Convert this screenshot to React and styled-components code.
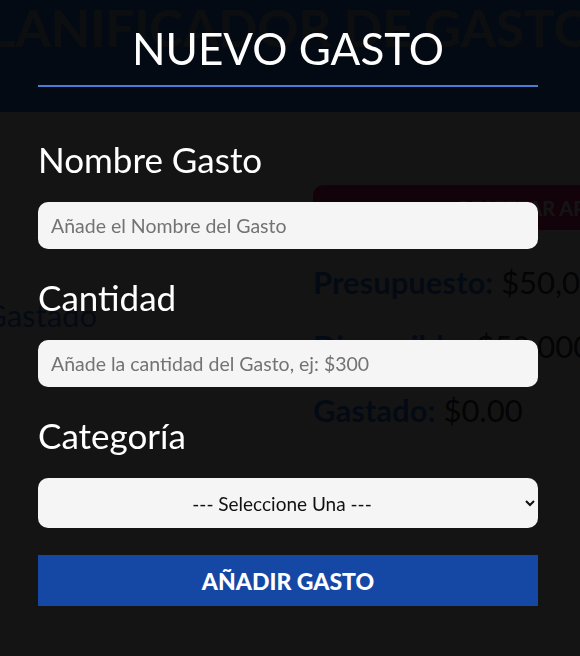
import React from "react";
import styled, { createGlobalStyle } from "styled-components";

const GlobalStyle = createGlobalStyle`
  html, body {
    margin: 0;
    padding: 0;
    overflow: hidden;
    background: #f5f5f5;
    font-family: "Lato", "Open Sans", sans-serif;
  }
  * { box-sizing: border-box; }
`;

const Header = styled.header`
  background: #3b82f6;
  height: 112px;
  display: flex;
  justify-content: center;
  overflow: visible;
`;

const HeaderTitle = styled.h1`
  margin: 0;
  color: #aab0ba;
  font-size: 51px;
  line-height: 56px;
  font-weight: 700;
  text-transform: uppercase;
  white-space: nowrap;
`;

const BudgetCard = styled.section`
  background: #fff;
  height: 414px;
  display: grid;
  grid-template-columns: 313px 430px;
  box-shadow: 0 2px 4px rgba(0, 0, 0, 0.15);
`;

const ChartCol = styled.div`
  display: flex;
  justify-content: flex-end;
  padding: 184px 216px 0 0;
`;

const ChartText = styled.span`
  color: #3b82f6;
  font-size: 31px;
  white-space: nowrap;
`;

const InfoCol = styled.div`
  display: flex;
  flex-direction: column;
  padding-top: 73px;
`;

const ResetButton = styled.button`
  background: #db2777;
  color: #fff;
  border: none;
  border-radius: 10px;
  height: 45px;
  font-family: inherit;
  font-size: 20px;
  font-weight: 700;
  text-transform: uppercase;
  margin-bottom: 34px;
`;

const InfoLine = styled.p`
  margin: 0 0 27px;
  font-size: 31px;
  line-height: 37px;
  color: #333;
  white-space: nowrap;

  span {
    color: #3b82f6;
    font-weight: 700;
  }
`;

const Modal = styled.div`
  position: fixed;
  inset: 0;
  background: rgba(0, 0, 0, 0.92);
`;

const Form = styled.form`
  width: 500px;
  margin: 0 0 0 38px;
  padding-top: 20px;
`;

const Legend = styled.legend`
  display: block;
  width: 100%;
  text-align: center;
  color: #fff;
  font-size: 44px;
  line-height: 56px;
  padding-bottom: 9px;
  border-bottom: 2px solid #4a7cd4;
  margin-bottom: 52px;
`;

const Field = styled.div`
  display: grid;
  margin-bottom: 28px;
`;

const Label = styled.label`
  color: #fff;
  font-size: 35px;
  line-height: 40px;
  margin-bottom: 23px;
`;

const Input = styled.input`
  height: 47px;
  border: none;
  border-radius: 10px;
  background: #f5f5f5;
  padding: 0 13px;
  font-family: inherit;
  font-size: 19.5px;
  color: #222;

  &::placeholder {
    color: #737373;
  }
`;

const Select = styled.select`
  height: 50px;
  border: none;
  border-radius: 10px;
  background: #f5f5f5;
  padding: 0 8px;
  font-family: inherit;
  font-size: 19px;
  color: #111;
  text-align: center;
`;

const Submit = styled.button`
  width: 100%;
  height: 51px;
  margin-top: -1px;
  border: none;
  background: #1547a5;
  color: #fff;
  font-family: inherit;
  font-size: 23px;
  font-weight: 900;
  text-transform: uppercase;
`;

export default function App() {
  return (
    <>
      <GlobalStyle />
      <Header>
        <HeaderTitle>Planificador de Gastos</HeaderTitle>
      </Header>
      <BudgetCard>
        <ChartCol>
          <ChartText>0% Gastado</ChartText>
        </ChartCol>
        <InfoCol>
          <ResetButton type="button">Resetear App</ResetButton>
          <InfoLine>
            <span>Presupuesto:</span> $50,000.00
          </InfoLine>
          <InfoLine>
            <span>Disponible:</span> $50,000.00
          </InfoLine>
          <InfoLine>
            <span>Gastado:</span> $0.00
          </InfoLine>
        </InfoCol>
      </BudgetCard>

      <Modal>
        <Form>
          <Legend>NUEVO GASTO</Legend>
          <Field>
            <Label htmlFor="nombre">Nombre Gasto</Label>
            <Input id="nombre" type="text" placeholder="Añade el Nombre del Gasto" />
          </Field>
          <Field>
            <Label htmlFor="cantidad">Cantidad</Label>
            <Input id="cantidad" type="number" placeholder="Añade la cantidad del Gasto, ej: $300" />
          </Field>
          <Field>
            <Label htmlFor="categoria">Categoría</Label>
            <Select id="categoria" defaultValue="">
              <option value="">--- Seleccione Una ---</option>
              <option value="ahorro">Ahorro</option>
              <option value="comida">Comida</option>
              <option value="casa">Casa</option>
            </Select>
          </Field>
          <Submit type="submit">Añadir Gasto</Submit>
        </Form>
      </Modal>
    </>
  );
}
